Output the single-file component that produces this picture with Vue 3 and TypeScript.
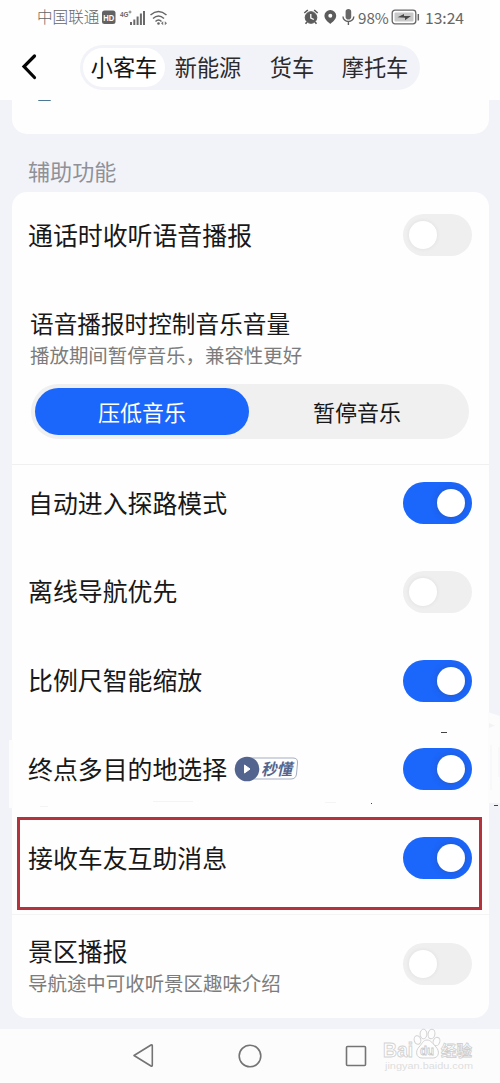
<script setup lang="ts">
import { ref } from 'vue'

interface SettingRow {
  label: string
  on: boolean
  badge?: string
}

const tabs: string[] = ['小客车', '新能源', '货车', '摩托车']
const activeTab = ref(0)

const callVoice = ref(false)
const scenic = ref(false)
const volumeModes: string[] = ['压低音乐', '暂停音乐']
const volumeMode = ref(0)

const rows = ref<SettingRow[]>([
  { label: '自动进入探路模式', on: true },
  { label: '离线导航优先', on: false },
  { label: '比例尺智能缩放', on: true },
  { label: '终点多目的地选择', on: true, badge: '秒懂' },
  { label: '接收车友互助消息', on: true },
])
</script>

<template>
  <div class="screen">
    <header class="top">
      <div class="status">
        <span class="carrier">中国联通</span>
        <svg class="status-left" width="72" height="22" viewBox="0 0 72 22">
          <rect x="2" y="3.500" width="13.500" height="13.500" rx="2.500" fill="#636363" />
          <text x="3.200" y="14" class="hd" textLength="11" lengthAdjust="spacingAndGlyphs">HD</text>
          <text x="20" y="10" class="net" textLength="8.500" lengthAdjust="spacingAndGlyphs">4G</text>
          <path d="M28.500 5h3M30 3.500v3" stroke="#666" stroke-width=".8" />
          <g fill="#6a6a6a">
            <rect x="30" y="15" width="2" height="3" /><rect x="33.300" y="12.500" width="2" height="5.500" />
            <rect x="36.600" y="9.500" width="2" height="8.500" /><rect x="39.900" y="6.500" width="2" height="11.500" />
            <rect x="43" y="4" width="2" height="14" />
          </g>
          <g fill="none" stroke="#666" stroke-width="1.500">
            <path d="M50.500 8Q58.500 1 66.500 8M53 11.500Q58.500 6.500 64 11.500M55.500 14.500Q58.500 11.500 61.500 14.500" />
          </g>
          <circle cx="58.500" cy="16.500" r="1.300" fill="#666" />
          <path d="m61 16.300 2.200-2v4zM67 16.300l-2.200-2v4z" fill="#777" />
        </svg>
        <span class="spacer"></span>
        <svg class="status-right" width="54" height="22" viewBox="0 0 54 22">
          <g fill="none" stroke="#595959">
            <circle cx="9" cy="11.500" r="5.800" fill="#5c5c5c" stroke-width="1" />
            <path d="m2.300 7 3.500-3M12.200 4l3.500 3M5 16l-1.500 1.800M13 16l1.500 1.800" stroke-width="1.600" />
            <path d="M8.800 8v4l3 1.500" stroke="#fff" stroke-width="1.300" />
          </g>
          <path fill-rule="evenodd" d="M28.300 4a5.800 5.800 0 0 0-5.900 5.700c0 3.800 4.200 6.500 5.900 8.300 1.700-1.800 5.900-4.500 5.900-8.300A5.800 5.800 0 0 0 28.300 4zm0 3.800a2 2 0 1 1 0 4 2 2 0 0 1 0-4z" fill="#5c5c5c" />
          <rect x="43.600" y="3" width="5.600" height="10.500" rx="2.800" fill="#666" />
          <path d="M41 10.500a5.400 5 0 0 0 10.800 0M46.400 15.500V19" fill="none" stroke="#606060" stroke-width="1.400" />
        </svg>
        <span class="percent">98%</span>
        <svg class="battery" width="30" height="18" viewBox="0 0 30 18">
          <rect x="1.200" y="2.200" width="23.600" height="13.600" rx="2.800" fill="#fff" stroke="#666" stroke-width="1.300" />
          <rect x="3.500" y="4.500" width="19" height="9" rx="1" fill="#c9c9c9" />
          <path d="m6.500 9.300 6.500-3.300v2h7l-6 4.300v-2.500z" fill="#484848" />
          <path d="M27.300 6v6.500" stroke="#666" stroke-width="1.500" />
        </svg>
        <span class="clock">13:24</span>
      </div>
      <div class="nav">
        <svg class="back" width="20" height="28" viewBox="0 0 20 28">
          <path d="M15.500 3 5 13.500 15.500 24.500" fill="none" stroke="#050505" stroke-width="3.200" stroke-linecap="round" />
        </svg>
        <nav class="tabs">
          <button v-for="(t, i) in tabs" :key="t" class="tab" :class="{ active: i === activeTab }" @click="activeTab = i">{{ t }}</button>
        </nav>
      </div>
    </header>

    <main class="content">
      <section class="card previous"><i class="sliver"></i></section>
      <h2 class="group-title">辅助功能</h2>
      <section class="card main-card">
        <div class="row first">
          <span class="label">通话时收听语音播报</span>
          <button class="toggle" :class="{ on: callVoice }" @click="callVoice = !callVoice"><i></i></button>
        </div>
        <div class="volume">
          <div class="volume-title">语音播报时控制音乐音量</div>
          <div class="hint">播放期间暂停音乐，兼容性更好</div>
          <div class="segment">
            <button v-for="(m, i) in volumeModes" :key="m" :class="{ chosen: i === volumeMode }" @click="volumeMode = i">{{ m }}</button>
          </div>
        </div>
        <div class="list">
          <div v-for="r in rows" :key="r.label" class="row">
            <span class="label">{{ r.label }}</span>
            <svg v-if="r.badge" class="badge" width="66" height="26" viewBox="0 0 66 26">
              <path d="M13 2h46q5 0 4.500 5l-1 11q-.6 5-5.500 5H13z" fill="#fff" stroke="#a3adc2" stroke-width="1" />
              <circle cx="13" cy="13" r="12.300" fill="#53658f" />
              <path d="M10.500 9v8l5.500-4z" fill="#fff" stroke="#fff" stroke-width="1" stroke-linejoin="round" />
              <text x="27" y="18.600" class="badge-text" textLength="31" lengthAdjust="spacingAndGlyphs">{{ r.badge }}</text>
            </svg>
            <button class="toggle" :class="{ on: r.on }" @click="r.on = !r.on"><i></i></button>
          </div>
        </div>
        <div class="row scenic">
          <div class="scenic-copy">
            <div class="label">景区播报</div>
            <div class="hint">导航途中可收听景区趣味介绍</div>
          </div>
          <button class="toggle" :class="{ on: scenic }" @click="scenic = !scenic"><i></i></button>
        </div>
      </section>
    </main>

    <footer class="system-nav">
      <svg width="500" height="54" viewBox="0 0 500 54" fill="none" stroke="#747474" stroke-width="1.600" stroke-linejoin="round">
        <path d="M134 26.500 151 16q1.300-.6 1.300.8v19.400q0 1.400-1.300.8z" />
        <circle cx="250" cy="27" r="10.800" />
        <rect x="346.500" y="17.500" width="19" height="19" rx="1" />
      </svg>
    </footer>

    <svg class="watermark" width="96" height="48" viewBox="0 0 96 48">
      <g fill="#fdfdfd" stroke="#d2d2d2" stroke-width="1">
        <ellipse cx="38.500" cy="14" rx="3.300" ry="4.300" transform="rotate(-15 38.500 14)" />
        <ellipse cx="44.500" cy="8" rx="3.400" ry="4.800" />
        <ellipse cx="52.500" cy="8" rx="3.400" ry="4.800" transform="rotate(10 52.500 8)" />
        <ellipse cx="57.500" cy="15.500" rx="3.300" ry="4.300" transform="rotate(20 57.500 15.500)" />
        <path d="M48 14c-4 0-5 4-8 7-4 4-3 11 3 11h11c6 0 7-7 3-11-3-3-5-7-9-7z" />
      </g>
      <text x="4" y="31" class="wm-bai" textLength="30" lengthAdjust="spacingAndGlyphs">Bai</text>
      <text x="41" y="28.500" class="wm-du" textLength="14" lengthAdjust="spacingAndGlyphs">du</text>
      <text x="62" y="29.500" class="wm-cn" textLength="31" lengthAdjust="spacingAndGlyphs">经验</text>
      <text x="6" y="42.500" class="wm-url" textLength="88" lengthAdjust="spacingAndGlyphs">jingyan.baidu.com</text>
    </svg>
    <svg class="annotation" width="500" height="210" viewBox="0 0 500 210">
      <path d="M488 2l12 4v87h-12zM9 30h4v68H9z" fill="#fcfcfd" />
      <path d="M489 13l6 2.500-6 2.500z" fill="#f3f3f7" />
      <path d="M491 35v45M499 37v30" stroke="#f4f4f7" />
      <path d="M441 22.500h6M494 95.500h4M371 93.500h1" stroke="#444" stroke-width="1" />
      <path d="M325 92.500h11M153 91.500h40M40 96.500h8" stroke="#f4f4f5" />
      <rect x="18.500" y="108.500" width="462" height="90" fill="none" stroke="#b3323b" stroke-width="3" />
    </svg>
  </div>
</template>

<style>
body {
  margin: 0;
  background: #f2f3f9;
}
</style>

<style scoped>
.screen {
  position: relative;
  width: 500px;
  height: 1083px;
  overflow: hidden;
  display: flex;
  flex-direction: column;
  background: #f2f3f9;
  color: #181818;
  font-family: "Noto Sans CJK SC", "Noto Sans", sans-serif;
}
.screen * { box-sizing: border-box; }
button {
  border: 0;
  padding: 0;
  margin: 0;
  background: none;
  color: inherit;
  font: inherit;
}
.top {
  height: 100px;
  flex: none;
  background: #fefefe;
}
.status {
  height: 34px;
  padding: 0 36px 0 37px;
  display: flex;
  align-items: center;
  color: #666;
  font-size: 15.600px;
  line-height: 34px;
}
.status svg { flex: none; }
.status-left { margin-top: 1px; }
.carrier { width: 62.500px; font-weight: 300; white-space: nowrap; padding-bottom: 2px; }
.spacer { flex: 1; }
.status-right { margin-right: 2px; }
.percent { width: 33px; font-size: 15.200px; }
.clock { margin-left: 4px; width: 39px; }
.percent, .clock { padding-bottom: 1px; }
.hd { font: bold 9.500px "Liberation Sans", sans-serif; fill: #fff; }
.net { font: bold 8px "Liberation Sans", sans-serif; fill: #666; }
.nav {
  height: 66px;
  display: flex;
  align-items: center;
  padding: 0 0 0 19px;
}
.back { flex: none; }
.tabs {
  margin-left: 41px;
  width: 340px;
  height: 45px;
  padding: 3px;
  display: flex;
  background: #f2f3f8;
  border-radius: 23px;
  font-size: 22.200px;
}
.tab { white-space: nowrap; line-height: 36px; color: #2b2b2d; padding: 0 0 3px; }
.tab:nth-child(1) { width: 82px; }
.tab:nth-child(2) { width: 86px; }
.tab:nth-child(3) { width: 82px; }
.tab:nth-child(4) { width: 84px; }
.tab.active { background: #fff; border-radius: 20px; color: #151515; }
.content { padding: 0 11px 0 12px; flex: none; height: 929px; }
.card { background: #fefefe; }
.previous {
  height: 34px;
  border-radius: 0 0 15px 15px;
  padding-left: 26px;
}
.sliver {
  display: block;
  width: 13px;
  height: 1px;
  border-radius: 0 0 7px 7px;
  background: #4b7896;
}
.group-title {
  margin: 0;
  height: 58px;
  padding: 19px 0 0 16px;
  line-height: 35px;
  font-size: 22.100px;
  font-weight: 400;
  color: #8f9197;
}
.main-card { height: 826px; border-radius: 15px; }
.row {
  height: 42px;
  display: flex;
  align-items: center;
  padding: 0 17px 0 16px;
}
.first { height: 86px; }
.label { font-size: 24.900px; line-height: 36px; white-space: nowrap; padding-bottom: 3px; }
.toggle {
  margin-left: auto;
  width: 69px;
  height: 42px;
  border-radius: 21px;
  background: #efefef;
  padding: 7px 6px;
  display: flex;
  flex: none;
}
.toggle i {
  width: 28px;
  height: 28px;
  border-radius: 50%;
  background: #fff;
  box-shadow: 0 0 4px rgba(0, 0, 0, 0.07);
}
.toggle.on {
  justify-content: flex-end;
  background: #1b66fb;
  padding-right: 7px;
}
.toggle.on i { box-shadow: 0 0 6px rgba(50, 70, 110, 0.4); }
.volume {
  height: 187px;
  padding: 28px 20px 0 18px;
  border-bottom: 1px solid #f0f0f0;
}
.volume-title { font-size: 23.650px; line-height: 34px; white-space: nowrap; }
.hint { font-size: 19.450px; line-height: 28px; color: #7c7c7c; white-space: nowrap; }
.volume .hint { height: 44px; padding-top: 1px; }
.segment {
  width: 438px;
  height: 55px;
  padding: 4px;
  margin-left: 1px;
  display: grid;
  grid-template-columns: 214px 1fr;
  border-radius: 28px;
  background: #f0f0f0;
  font-size: 22px;
}
.segment button { border-radius: 24px; line-height: 46px; padding-bottom: 1px; }
.segment .chosen { background: #1b66fb; color: #fff; }
.list {
  height: 450px;
  padding-top: 17px;
  border-bottom: 1px solid #f4f4f5;
  display: flex;
  flex-direction: column;
  gap: 46.750px;
}
.list .row { flex: none; }
.badge { margin-left: 7px; flex: none; }
.badge-text { font: italic bold 16px "Noto Sans CJK SC", sans-serif; fill: #53658f; }
.scenic { height: 98px; }
.scenic-copy .hint { margin-top: -2px; }
.system-nav { height: 54px; background: #fcfcfc; flex: none; }
.system-nav svg { display: block; }
.watermark { position: absolute; left: 379px; top: 1026px; }
.wm-bai { font: bold 20px "Liberation Sans", sans-serif; fill: #fff; stroke: #d2d2d2; stroke-width: 0.900; }
.wm-du { font: bold 13px "Liberation Sans", sans-serif; fill: #fff; stroke: #c8c8c8; stroke-width: 0.800; }
.wm-cn { font: bold 15px "Noto Sans CJK SC", sans-serif; fill: #fff; stroke: #cecece; stroke-width: 0.800; }
.wm-url { font: 9px "Liberation Sans", sans-serif; fill: #dedede; }
.annotation { position: absolute; left: 0; top: 710px; pointer-events: none; }
</style>
